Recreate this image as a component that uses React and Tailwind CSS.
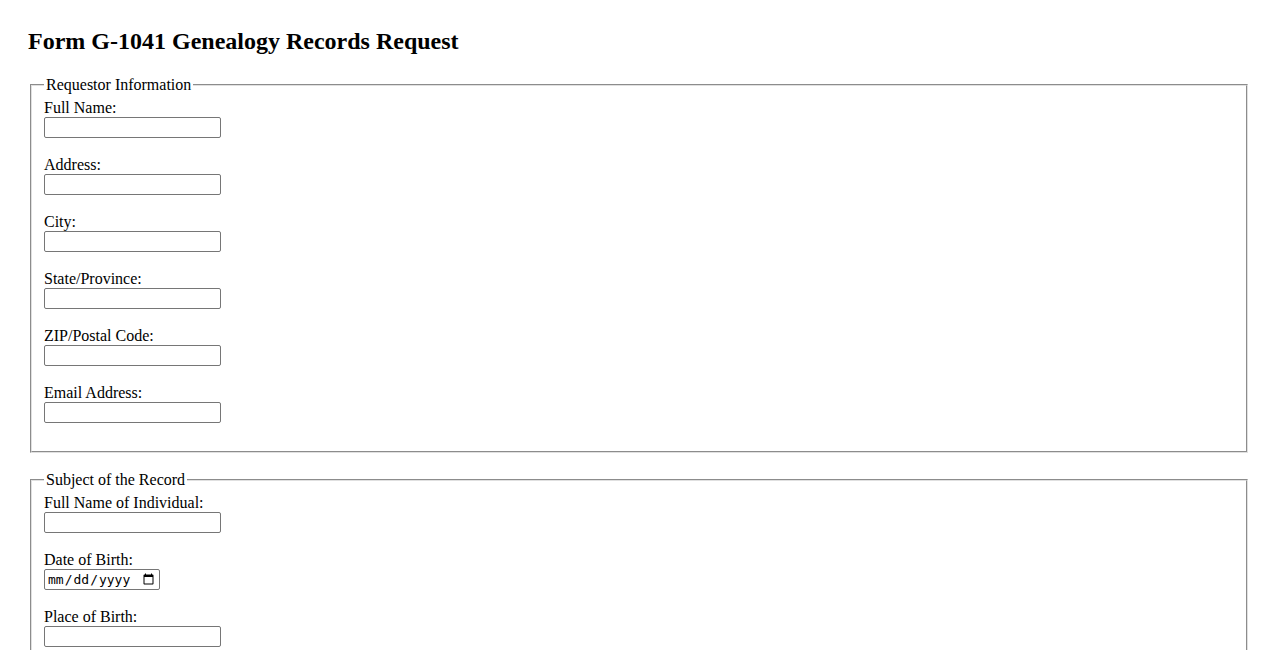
import React from 'react';

const serif = { fontFamily: '"Liberation Serif", "Times New Roman", serif' };

function Field({ label, type = 'text' }) {
  return (
    <div className="flex flex-col items-start mb-[18px]">
      <label className="block text-[16px] leading-[18px] text-black">{label}</label>
      {type === 'date' ? (
        <input
          type="date"
          className="w-[116px] h-[21px] border border-[#767676] rounded-[2px] px-[2px] text-[13px] font-['DejaVu_Sans_Mono',monospace] text-black bg-white"
        />
      ) : (
        <input
          type="text"
          className="w-[177px] h-[21px] border border-[#767676] rounded-[2px] px-[2px] text-[13px] bg-white"
        />
      )}
    </div>
  );
}

function Section({ legend, children }) {
  return (
    <fieldset className="mx-[2px] mb-[18px] border-2 [border-style:groove] border-[#e0e0e0] px-[12px] pt-[5px] pb-[10px]">
      <legend className="px-[2px] text-[16px] leading-[18px]">{legend}</legend>
      {children}
    </fieldset>
  );
}

export default function App() {
  return (
    <div className="min-h-screen bg-white text-black px-[28px] pt-[26px]" style={serif}>
      <h1 className="text-[24px] leading-[28px] font-bold mb-[21px] mt-[1px]">Form G-1041 Genealogy Records Request</h1>

      <Section legend="Requestor Information">
        <Field label="Full Name:" />
        <Field label="Address:" />
        <Field label="City:" />
        <Field label="State/Province:" />
        <Field label="ZIP/Postal Code:" />
        <Field label="Email Address:" />
      </Section>

      <Section legend="Subject of the Record">
        <Field label="Full Name of Individual:" />
        <Field label="Date of Birth:" type="date" />
        <Field label="Place of Birth:" />
        <Field label="Date of Death (if applicable):" type="date" />
        <Field label="Place of Death (if applicable):" />
      </Section>
    </div>
  );
}
